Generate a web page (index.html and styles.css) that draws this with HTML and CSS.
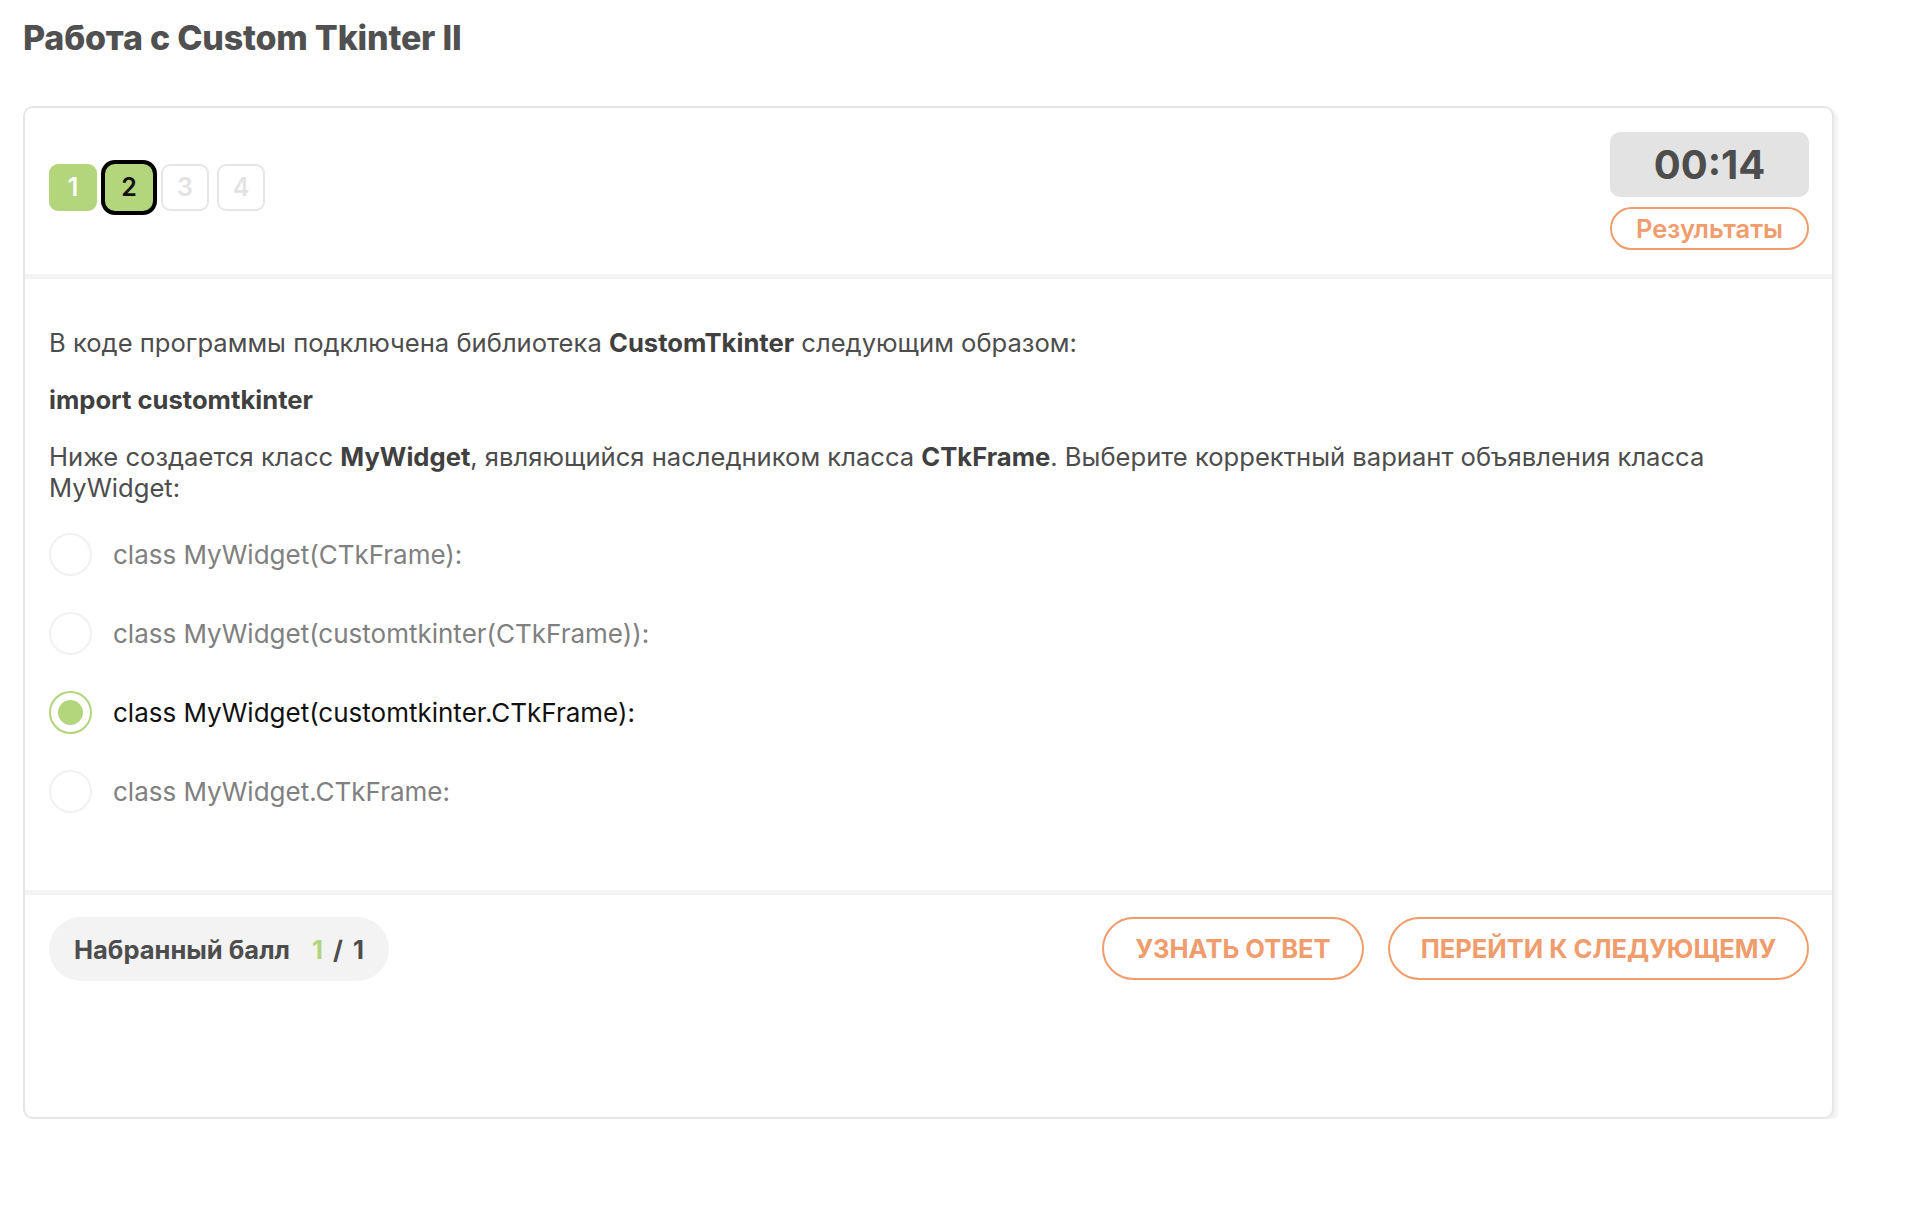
FILE: index.html
```html
<!DOCTYPE html>
<html lang="ru">
<head>
<meta charset="utf-8">
<title>Работа с Custom Tkinter II</title>
<link rel="stylesheet" href="styles.css">
</head>
<body>
<h1 class="page-title">Работа с Custom Tkinter II</h1>
<div class="card">
  <div class="card-header">
    <div class="tabs">
      <div class="tab tab-done">1</div>
      <div class="tab tab-done tab-current">2</div>
      <div class="tab">3</div>
      <div class="tab">4</div>
    </div>
    <div class="timer-col">
      <div class="timer">00:14</div>
      <button class="btn-results">Результаты</button>
    </div>
  </div>
  <div class="card-body">
    <p class="q">В коде программы подключена библиотека <b>CustomTkinter</b> следующим образом:</p>
    <p class="q"><b>import customtkinter</b></p>
    <p class="q"><span>Ниже создается класс </span><b>MyWidget</b><span>, являющийся наследником класса </span><b>CTkFrame</b><span>. Выберите корректный вариант объявления класса</span><br><span>MyWidget:</span></p>
    <div class="options">
      <div class="option"><span class="radio"></span><span class="opt-text">class MyWidget(CTkFrame):</span></div>
      <div class="option"><span class="radio"></span><span class="opt-text">class MyWidget(customtkinter(CTkFrame)):</span></div>
      <div class="option option-selected"><span class="radio"></span><span class="opt-text">class MyWidget(customtkinter.CTkFrame):</span></div>
      <div class="option"><span class="radio"></span><span class="opt-text">class MyWidget.CTkFrame:</span></div>
    </div>
  </div>
  <div class="card-footer">
    <div class="score">Набранный балл <span class="score-val"><span class="score-got">1</span> / 1</span></div>
    <div class="actions">
      <button class="btn-outline btn-answer">УЗНАТЬ ОТВЕТ</button>
      <button class="btn-outline btn-next">ПЕРЕЙТИ К СЛЕДУЮЩЕМУ</button>
    </div>
  </div>
</div>
</body>
</html>
```
FILE: styles.css
```css
* { box-sizing: border-box; }
body {
  margin: 0;
  padding: 0 23px;
  font-family: Inter, "Noto Sans", sans-serif;
  color: #4d4d4d;
  background: #fff;
}
.page-title {
  margin: 0;
  padding-top: 17px;
  font-size: 34px;
  line-height: 42px;
  font-weight: 800;
  color: #505050;
  letter-spacing: -0.2px;
}
.card {
  margin-top: 47px;
  width: 1811px;
  border: 2px solid #e6e6e6;
  border-radius: 10px;
  box-shadow: 4px 3px 3px rgba(0,0,0,0.05);
  background: #fff;
}
.card-header {
  display: flex;
  justify-content: space-between;
  align-items: center;
  padding: 24px 23px 24px 24px;
  border-bottom: 5px solid #f3f3f3;
}
.tabs {
  display: flex;
  gap: 8px;
  margin-bottom: 8px;
}
.tab {
  width: 48px;
  height: 47px;
  border: 2px solid #e6e6e6;
  border-radius: 9px;
  display: flex;
  align-items: center;
  justify-content: center;
  font-size: 25px;
  font-weight: 600;
  color: #e3e3e3;
}
.tab-done {
  background: #b3d57b;
  border-color: #b3d57b;
  color: #fff;
}
.tab-current {
  color: #111;
  border-radius: 10px;
  box-shadow: 0 0 0 4px #000;
}
.timer-col {
  display: flex;
  flex-direction: column;
  gap: 10px;
  width: 199px;
}
.timer {
  height: 65px;
  background: #e3e3e3;
  border-radius: 10px;
  display: flex;
  align-items: center;
  justify-content: center;
  font-size: 40px;
  font-weight: 700;
  color: #4d4d4d;
}
.btn-results {
  height: 43px;
  border: 2px solid #f09c6c;
  border-radius: 22px;
  background: #fff;
  font-family: inherit;
  font-size: 25.5px;
  font-weight: 600;
  color: #f09c6c;
  padding: 0;
}
.card-body {
  padding: 48px 24px 77px 24px;
  border-bottom: 5px solid #f3f3f3;
}
.q {
  margin: 0 0 26px 0;
  font-size: 25.6px;
  line-height: 31px;
  color: #4d4d4d;
}
.q b { font-weight: 700; color: #404040; }
.options {
  display: flex;
  flex-direction: column;
  gap: 36px;
  padding-top: 4px;
}
.option {
  display: flex;
  align-items: center;
  gap: 21px;
  height: 43px;
}
.radio {
  width: 43px;
  height: 43px;
  border-radius: 50%;
  border: 2px solid #f1f1f1;
  display: flex;
  align-items: center;
  justify-content: center;
  flex: none;
}
.opt-text {
  font-size: 26px;
  color: #808080;
}
.option-selected .radio { border-color: #b3d57b; }
.option-selected .radio::after {
  content: "";
  width: 25px;
  height: 25px;
  border-radius: 50%;
  background: #b3d57b;
}
.option-selected .opt-text { color: #111; }
.card-footer {
  display: flex;
  justify-content: space-between;
  align-items: flex-start;
  padding: 22px 23px 0 24px;
  height: 222px;
}
.score {
  height: 64px;
  padding: 0 20px 0 25px;
  border-radius: 32px;
  background: #f3f3f3;
  display: flex;
  align-items: center;
  font-size: 25.5px;
  font-weight: 700;
  color: #4d4d4d;
  width: 340px;
}
.score-val { margin-left: 22px; word-spacing: 3px; letter-spacing: 0.5px; }
.score-got { color: #b3d57b; }
.actions {
  display: flex;
  gap: 24px;
}
.btn-outline {
  height: 63px;
  padding: 0;
  border: 2px solid #f09c6c;
  border-radius: 32px;
  background: #fff;
  font-family: inherit;
  font-size: 25.5px;
  font-weight: 700;
  color: #f09c6c;
}
.btn-answer { width: 262px; }
.btn-next { width: 421px; }
```
